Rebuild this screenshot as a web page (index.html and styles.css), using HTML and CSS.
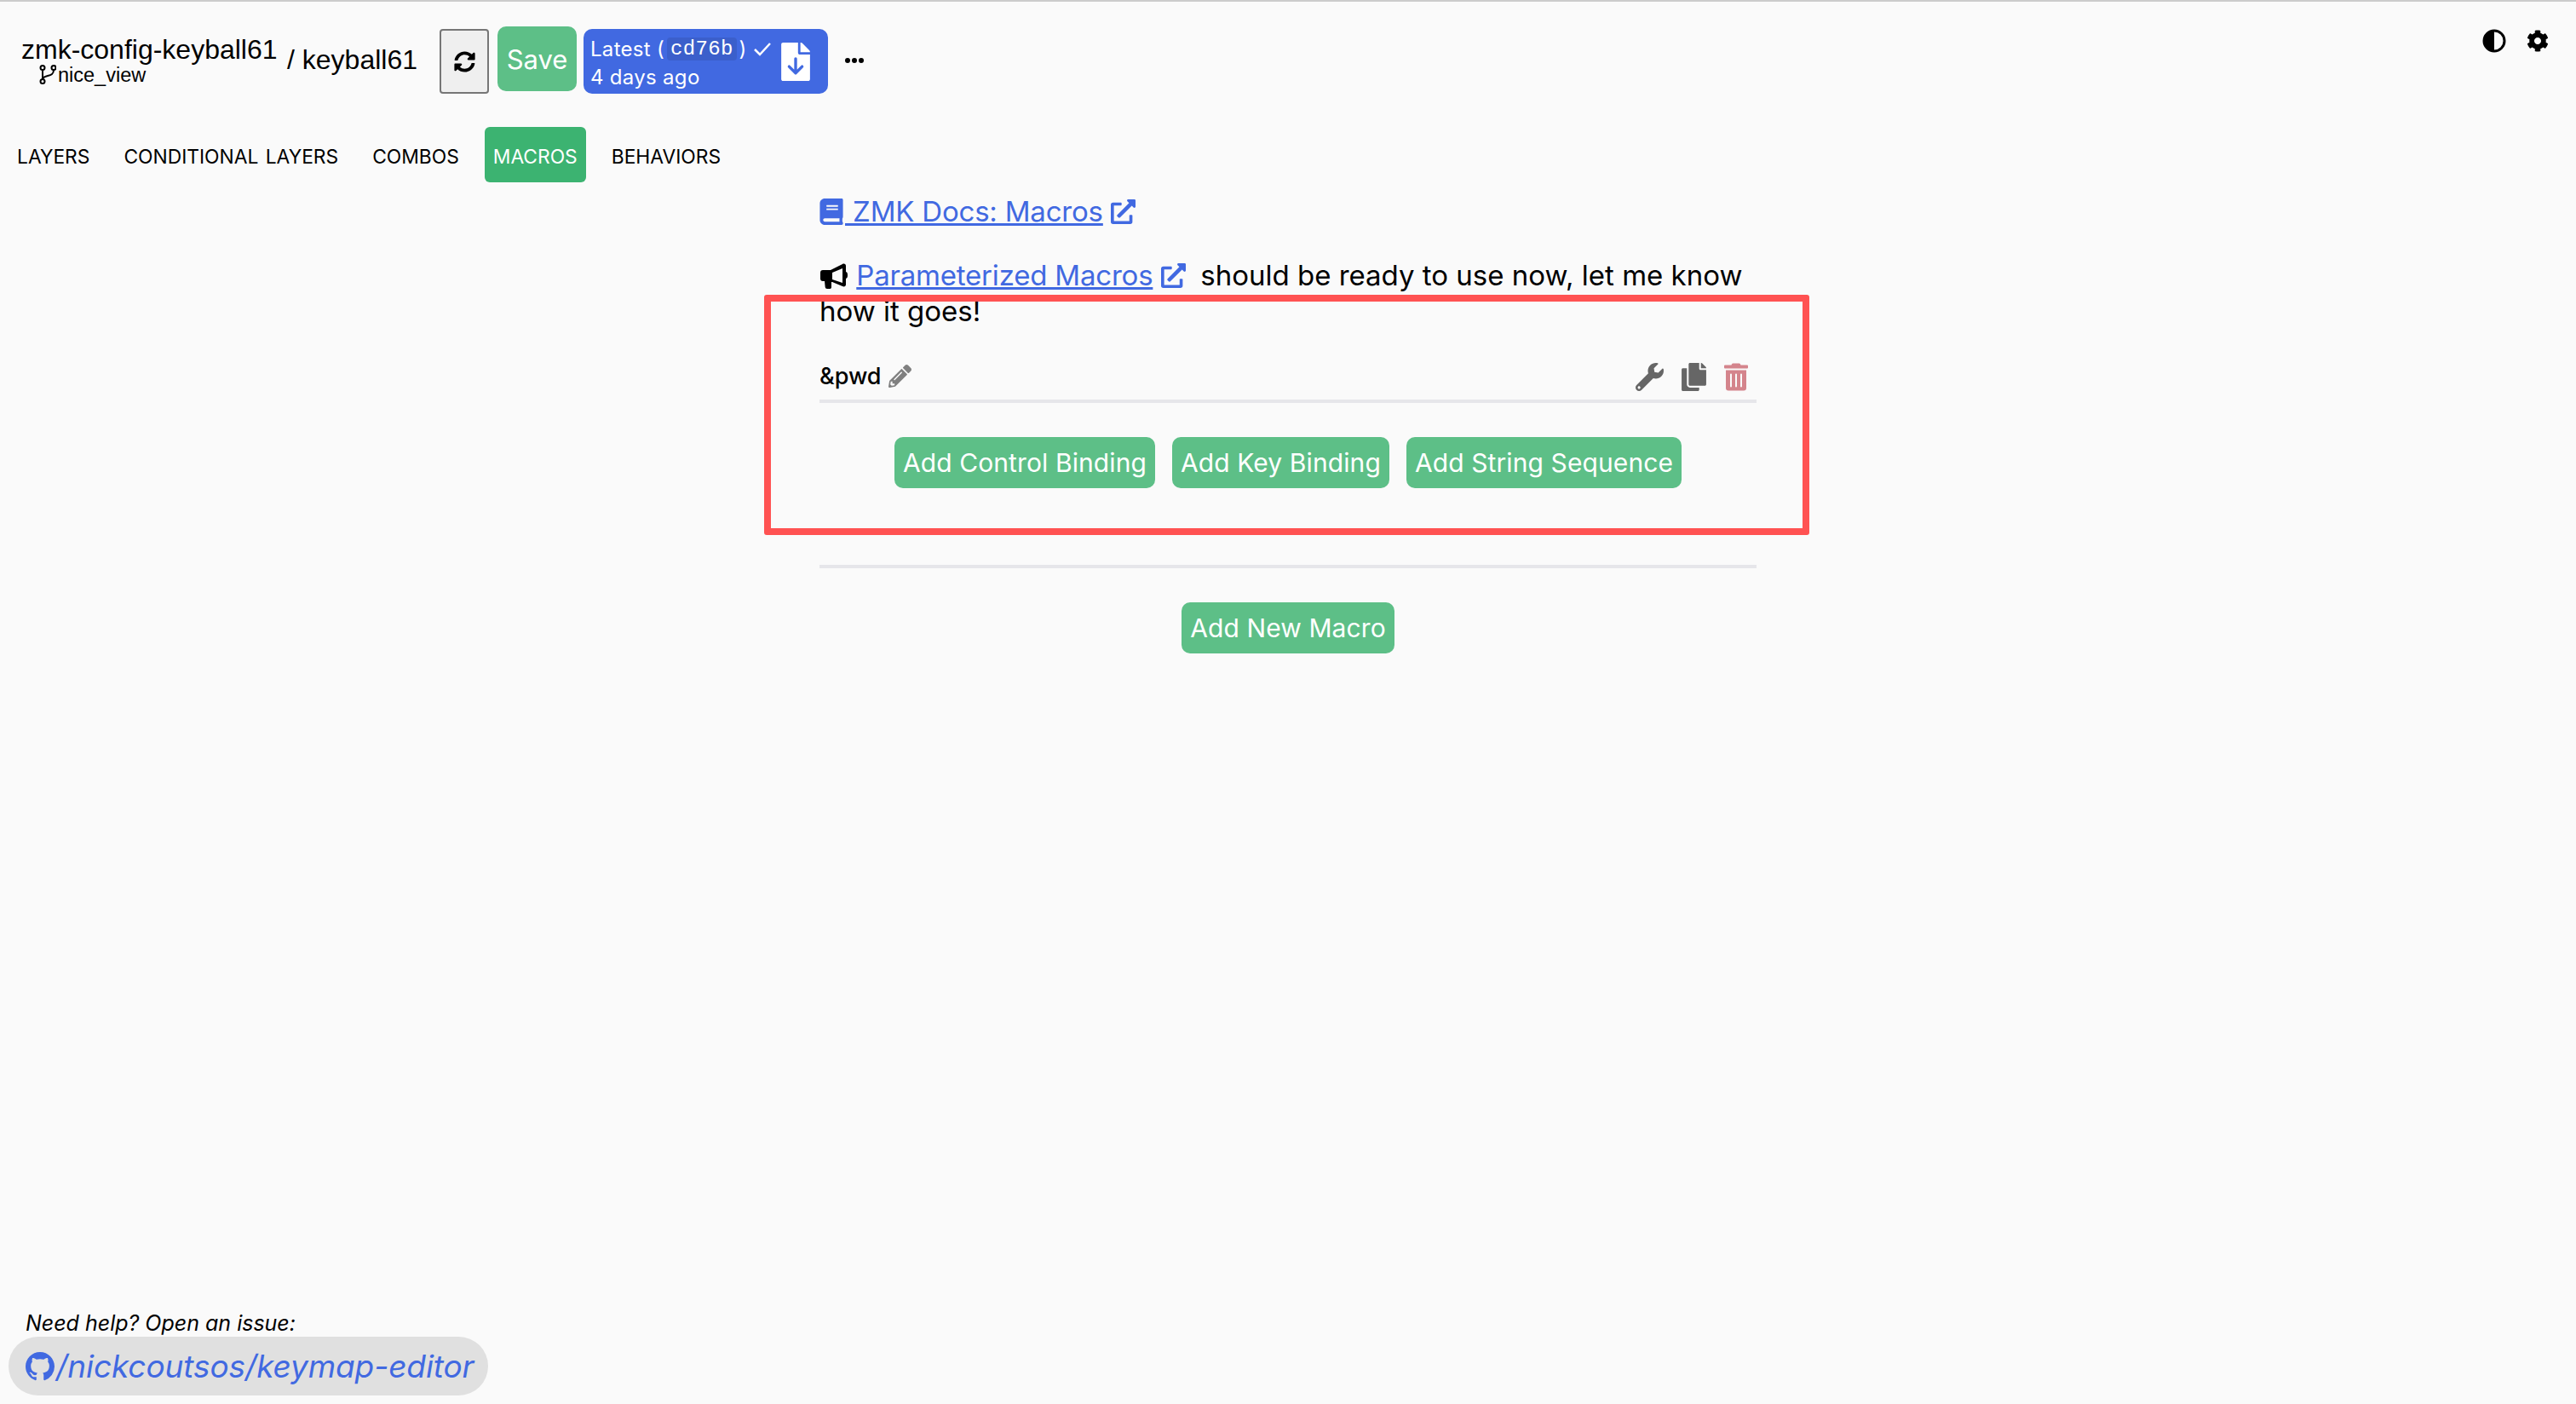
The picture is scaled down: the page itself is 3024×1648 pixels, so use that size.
FILE: index.html
```html
<!DOCTYPE html>
<html lang="en">
<head>
    <meta charset="UTF-8">
    <title>Keymap Editor</title>
    <link rel="stylesheet" href="styles.css">
</head>
<body>
    <header class="toolbar">
        <div class="repo">
            <div class="repo-name">zmk-config-keyball61</div>
            <div class="repo-branch">
                <svg class="icon-branch" viewBox="0 0 20 23"><circle cx="4" cy="3.500" r="2.500"/><circle cx="17" cy="3.500" r="2.500"/><circle cx="4" cy="19.500" r="2.500"/><path d="M4 6v11M17 6c0 5-3 6-7 7s-6 2-6 4"/></svg>
                <span>nice_view</span>
            </div>
        </div>
        <div class="keymap-name">/ keyball61</div>
        <button class="btn-refresh">
            <svg class="icon-refresh" viewBox="0 0 512 512"><path d="M370.72 133.28C339.458 104.008 298.888 87.962 255.848 88c-77.458.068-144.328 53.178-162.791 126.85-1.344 5.363-6.122 9.15-11.651 9.15H24.103c-7.498 0-13.194-6.807-11.807-14.176C33.933 94.924 134.813 8 256 8c66.448 0 126.791 26.136 171.315 68.685L463.03 40.97C478.149 25.851 504 36.559 504 57.941V192c0 13.255-10.745 24-24 24H345.941c-21.382 0-32.09-25.851-16.971-40.971l41.75-41.749zM32 296h134.059c21.382 0 32.09 25.851 16.971 40.971l-41.75 41.75c31.262 29.273 71.835 45.319 114.876 45.28 77.418-.07 144.315-53.144 162.787-126.849 1.344-5.363 6.122-9.15 11.651-9.15h57.304c7.498 0 13.194 6.807 11.807 14.176C478.067 417.076 377.187 504 256 504c-66.448 0-126.791-26.136-171.315-68.685L48.97 471.03C33.851 486.149 8 475.441 8 454.059V320c0-13.255 10.745-24 24-24z"/></svg>
        </button>
        <button class="btn-save">Save</button>
        <div class="version">
            <div class="version-text">
                <div class="version-line">Latest (<span class="version-hash">cd76b</span>)
                    <svg class="icon-check" viewBox="0 0 24 24"><path d="M3 13l6 6L21 6"/></svg>
                </div>
                <div class="version-line">4 days ago</div>
            </div>
            <svg class="icon-file" viewBox="0 0 384 512">
                <path d="M224 136V0H24C10.7 0 0 10.7 0 24v464c0 13.3 10.7 24 24 24h336c13.3 0 24-10.7 24-24V160H248c-13.2 0-24-10.8-24-24zM377 105L279.1 7c-4.500-4.500-10.600-7-17-7H256v128h128v-6.100c0-6.300-2.500-12.400-7-16.900z"/>
                <path class="file-arrow" d="M192 214v185M105 320l87 87 87-87"/>
            </svg>
        </div>
        <svg class="icon-more" viewBox="0 0 22 6"><circle cx="3" cy="3" r="3"/><circle cx="11" cy="3" r="3"/><circle cx="19" cy="3" r="3"/></svg>
        <div class="toolbar-right">
            <svg class="icon-contrast" viewBox="0 0 28 28"><circle cx="14" cy="14" r="12" class="contrast-ring"/><path d="M14 2a12 12 0 0 0 0 24z"/></svg>
            <svg class="icon-gear" viewBox="0 0 512 512"><path d="M487.4 315.7l-42.6-24.6c4.3-23.2 4.3-47 0-70.2l42.6-24.6c4.9-2.8 7.1-8.600 5.500-14-11.100-35.600-30-67.800-54.700-94.600-3.800-4.100-10-5.100-14.800-2.300L380.800 110c-17.900-15.400-38.500-27.300-60.800-35.100V25.800c0-5.600-3.900-10.500-9.400-11.700-36.700-8.200-74.300-7.800-109.200 0-5.500 1.200-9.400 6.100-9.400 11.700V75c-22.200 7.900-42.800 19.800-60.800 35.100L88.700 85.500c-4.900-2.800-11-1.900-14.800 2.300-24.700 26.700-43.600 58.900-54.700 94.600-1.700 5.400.6 11.200 5.500 14L67.300 221c-4.300 23.200-4.300 47 0 70.200l-42.600 24.600c-4.900 2.800-7.100 8.600-5.500 14 11.100 35.600 30 67.800 54.700 94.600 3.800 4.100 10 5.100 14.800 2.300l42.600-24.600c17.900 15.400 38.500 27.300 60.800 35.100v49.200c0 5.600 3.900 10.500 9.400 11.700 36.700 8.200 74.300 7.800 109.200 0 5.500-1.200 9.400-6.100 9.400-11.700v-49.200c22.200-7.900 42.800-19.800 60.800-35.100l42.600 24.600c4.900 2.800 11 1.900 14.800-2.300 24.700-26.700 43.600-58.900 54.700-94.600 1.500-5.500-.7-11.300-5.600-14.100zM256 336c-44.100 0-80-35.900-80-80s35.900-80 80-80 80 35.900 80 80-35.900 80-80 80z"/></svg>
        </div>
    </header>

    <nav class="tabs">
        <a class="tab">LAYERS</a>
        <a class="tab">CONDITIONAL LAYERS</a>
        <a class="tab">COMBOS</a>
        <a class="tab tab-active">MACROS</a>
        <a class="tab">BEHAVIORS</a>
    </nav>

    <main class="content">
        <p class="docs-line">
            <a class="link">
                <svg class="icon-book" viewBox="0 0 448 512"><path d="M448 360V24c0-13.300-10.700-24-24-24H96C43 0 0 43 0 96v320c0 53 43 96 96 96h328c13.300 0 24-10.700 24-24v-16c0-7.500-3.500-14.300-8.900-18.700-4.200-15.400-4.200-59.300 0-74.700 5.400-4.300 8.900-11.100 8.900-18.600zM128 134c0-3.300 2.700-6 6-6h212c3.300 0 6 2.700 6 6v20c0 3.300-2.700 6-6 6H134c-3.300 0-6-2.700-6-6v-20zm0 64c0-3.300 2.700-6 6-6h212c3.300 0 6 2.700 6 6v20c0 3.300-2.700 6-6 6H134c-3.300 0-6-2.700-6-6v-20zm253.400 250H96c-17.700 0-32-14.300-32-32 0-17.600 14.400-32 32-32h285.400c-1.900 17.100-1.900 46.900 0 64z"/></svg>
                ZMK Docs: Macros</a>
            <svg class="icon-external" viewBox="0 0 512 512"><path d="M432,320H400a16,16,0,0,0-16,16V448H64V128H208a16,16,0,0,0,16-16V80a16,16,0,0,0-16-16H48A48,48,0,0,0,0,112V464a48,48,0,0,0,48,48H400a48,48,0,0,0,48-48V336A16,16,0,0,0,432,320ZM488,0h-128c-21.370,0-32.050,25.910-17,41l35.730,35.730L135,320.370a24,24,0,0,0,0,34L157.670,377a24,24,0,0,0,34,0L435.280,133.320,471,169c15,15,41,4.500,41-17V24A24,24,0,0,0,488,0Z"/></svg>
        </p>
        <p class="notice">
            <svg class="icon-bullhorn" viewBox="0 0 32 32"><path fill-rule="evenodd" d="M3 9h9L26 2c2-1 4 0 4 2v7c1.500.5 2 1.500 2 4s-.5 3.500-2 4v7c0 2-2 3-4 2L14 23h-1v6c0 1.500-1 2-2 2H8c-1.500 0-2-.7-2.300-2L5 22H3c-2 0-3-1-3-3v-7c0-2 1-3 3-3zM14 12v8l12 4V7z"/></svg>
            <a class="link">Parameterized Macros</a>
            <svg class="icon-external" viewBox="0 0 512 512"><path d="M432,320H400a16,16,0,0,0-16,16V448H64V128H208a16,16,0,0,0,16-16V80a16,16,0,0,0-16-16H48A48,48,0,0,0,0,112V464a48,48,0,0,0,48,48H400a48,48,0,0,0,48-48V336A16,16,0,0,0,432,320ZM488,0h-128c-21.370,0-32.050,25.910-17,41l35.730,35.730L135,320.370a24,24,0,0,0,0,34L157.670,377a24,24,0,0,0,34,0L435.280,133.320,471,169c15,15,41,4.500,41-17V24A24,24,0,0,0,488,0Z"/></svg>
            <span class="notice-text">&nbsp;should be ready to use now, let me know</span>
            <span>how it goes!</span>
        </p>

        <div class="macro-head">
            <span class="macro-name">&amp;pwd</span>
            <svg class="icon-pencil" viewBox="0 0 512 512"><path d="M497.900 142.100l-46.100 46.100c-4.700 4.700-12.300 4.700-17 0l-111-111c-4.700-4.700-4.700-12.300 0-17l46.100-46.100c18.700-18.700 49.100-18.700 67.900 0l60.100 60.100c18.800 18.700 18.800 49.100 0 67.900zM284.200 99.800L21.600 362.400.4 483.900c-2.900 16.400 11.400 30.600 27.800 27.800l121.500-21.300 262.600-262.600c4.700-4.700 4.700-12.300 0-17l-111-111c-4.800-4.700-12.400-4.700-17.100 0zM124.100 339.900c-5.500-5.500-5.500-14.300 0-19.800l154-154c5.500-5.500 14.300-5.500 19.800 0s5.500 14.300 0 19.800l-154 154c-5.500 5.500-14.300 5.500-19.800 0zM88 424h48v36.300l-64.500 11.300-31.100-31.100L51.700 376H88v48z"/></svg>
            <div class="macro-actions">
                <svg class="icon-action" viewBox="0 0 512 512"><path d="M507.730 109.100c-2.240-9.030-13.540-12.090-20.120-5.510l-74.360 74.360-67.880-11.310-11.310-67.880 74.360-74.360c6.620-6.620 3.430-17.900-5.660-20.160-47.380-11.740-99.550.91-136.580 37.930-39.640 39.640-50.550 97.100-34.050 147.200L18.740 402.760c-24.990 24.990-24.990 65.510 0 90.500 24.990 24.990 65.510 24.990 90.500 0l213.210-213.210c50.120 16.710 107.470 5.680 147.370-34.220 37.070-37.070 49.700-89.320 37.910-136.730zM64 472c-13.250 0-24-10.750-24-24 0-13.260 10.750-24 24-24s24 10.740 24 24c0 13.250-10.750 24-24 24z"/></svg>
                <svg class="icon-action" viewBox="0 0 448 512"><path d="M320 448v40c0 13.255-10.745 24-24 24H24c-13.255 0-24-10.745-24-24V120c0-13.255 10.745-24 24-24h72v296c0 30.879 25.121 56 56 56h168zm0-344V0H152c-13.255 0-24 10.745-24 24v368c0 13.255 10.745 24 24 24h272c13.255 0 24-10.745 24-24V128H344c-13.200 0-24-10.800-24-24zm120.971-31.029L375.029 7.029A24 24 0 0 0 358.059 0H352v96h96v-6.059a24 24 0 0 0-7.029-16.970z"/></svg>
                <svg class="icon-action icon-trash" viewBox="0 0 448 512"><path d="M32 464a48 48 0 0 0 48 48h288a48 48 0 0 0 48-48V128H32zm272-256a16 16 0 0 1 32 0v224a16 16 0 0 1-32 0zm-96 0a16 16 0 0 1 32 0v224a16 16 0 0 1-32 0zm-96 0a16 16 0 0 1 32 0v224a16 16 0 0 1-32 0zM432 32H312l-9.400-18.700A24 24 0 0 0 281.100 0H166.800a23.720 23.720 0 0 0-21.400 13.300L136 32H16A16 16 0 0 0 0 48v32a16 16 0 0 0 16 16h416a16 16 0 0 0 16-16V48a16 16 0 0 0-16-16z"/></svg>
            </div>
        </div>
        <div class="macro-buttons">
            <button class="btn-green">Add Control Binding</button>
            <button class="btn-green">Add Key Binding</button>
            <button class="btn-green">Add String Sequence</button>
        </div>
        <div class="add-macro">
            <button class="btn-green">Add New Macro</button>
        </div>
    </main>

    <footer class="help">
        <div class="help-text">Need help? Open an issue:</div>
        <a class="repo-pill">
            <svg class="icon-github" viewBox="0 0 16 16"><path d="M8 0C3.580 0 0 3.580 0 8c0 3.540 2.290 6.530 5.470 7.590.4.070.55-.17.55-.38 0-.19-.01-.82-.01-1.490-2.010.37-2.530-.49-2.690-.94-.09-.23-.48-.94-.82-1.130-.28-.15-.68-.52-.01-.53.63-.01 1.080.58 1.230.82.72 1.210 1.870.87 2.330.66.070-.52.28-.87.51-1.070-1.780-.2-3.640-.89-3.640-3.950 0-.87.31-1.590.82-2.150-.08-.2-.36-1.020.08-2.120 0 0 .67-.21 2.200.82.64-.18 1.320-.27 2-.27.68 0 1.360.09 2 .27 1.530-1.040 2.200-.82 2.200-.82.44 1.100.16 1.920.08 2.120.51.56.82 1.270.82 2.150 0 3.070-1.870 3.750-3.650 3.950.29.25.54.73.54 1.480 0 1.070-.01 1.930-.01 2.200 0 .21.15.46.55.38A8.013 8.013 0 0016 8c0-4.420-3.580-8-8-8z"/></svg>
            <span>/nickcoutsos/keymap-editor</span>
        </a>
    </footer>

    <div class="highlight-box"></div>
</body>
</html>
```

FILE: styles.css
```css
* {
    box-sizing: border-box;
}

body {
    margin: 0;
    height: 1648px;
    overflow: hidden;
    position: relative;
    display: flex;
    flex-direction: column;
    border-top: 2px solid #cccccc;
    background-color: #fafafa;
    color: #000;
    font-family: Inter, "Liberation Sans", sans-serif;
}

/* top bar */
.toolbar {
    display: flex;
    align-items: center;
    height: 140px;
    padding-left: 25px;
}

.repo {
    width: 312px;
    margin-top: -2px;
}

.repo-name {
    font-family: "Liberation Sans", sans-serif;
    font-size: 32px;
    line-height: 33px;
}

.repo-branch {
    display: flex;
    align-items: center;
    padding-left: 21px;
    font-family: "Liberation Sans", sans-serif;
    font-size: 23.5px;
    line-height: 26px;
}

.icon-branch {
    flex: none;
    width: 20px;
    height: 23px;
    margin-right: 2px;
    fill: none;
    stroke: #000;
    stroke-width: 2;
}

.keymap-name {
    width: 179px;
    font-family: "Liberation Sans", sans-serif;
    font-size: 32px;
    margin-top: -4px;
}

.btn-refresh {
    display: flex;
    align-items: center;
    justify-content: center;
    width: 58px;
    height: 76px;
    padding: 0;
    border: 2px solid #767676;
    border-radius: 4px;
    background-color: #efefef;
    margin-right: 10px;
}

.icon-refresh {
    width: 25px;
    height: 25px;
}

.btn-save {
    width: 93px;
    height: 76px;
    margin-top: -6px;
    margin-right: 8px;
    padding: 0;
    border: none;
    border-radius: 10px;
    background-color: #5dbf87;
    color: #fff;
    font-family: inherit;
    font-size: 31px;
}

.version {
    display: flex;
    align-items: center;
    width: 287px;
    height: 76px;
    padding-left: 8px;
    border-radius: 10px;
    background-color: #4169e1;
    color: #fff;
    font-size: 24px;
    letter-spacing: 0.3px;
}

.version-text {
    width: 224px;
    padding-top: 3px;
}

.version-line {
    display: flex;
    align-items: center;
    height: 33px;
}

.version-hash {
    margin: 0 3px;
    padding: 0 4px;
    border-radius: 4px;
    background-color: #3b5fcb;
    font-family: "Liberation Mono", monospace;
}

.icon-check {
    width: 24px;
    height: 24px;
    margin-left: 6px;
    fill: none;
    stroke: #fff;
    stroke-width: 2.5;
}

.icon-file {
    width: 34px;
    height: 45px;
    fill: #fff;
}

.file-arrow {
    fill: none;
    stroke: #4169e1;
    stroke-width: 38;
    stroke-linecap: round;
    stroke-linejoin: round;
}

.icon-more {
    width: 22px;
    height: 6px;
    margin-left: 20px;
    margin-top: -2px;
}

.toolbar-right {
    display: flex;
    align-items: center;
    gap: 24px;
    margin-left: auto;
    margin-right: 32px;
    margin-top: -48px;
}

.icon-contrast {
    width: 28px;
    height: 28px;
}

.contrast-ring {
    fill: none;
    stroke: #000;
    stroke-width: 3;
}

.icon-gear {
    width: 26px;
    height: 28px;
}

/* tabs */
.tabs {
    display: flex;
    align-items: center;
    height: 66px;
    margin-top: 6px;
    padding-left: 10px;
    font-size: 22.8px;
}

.tab {
    display: block;
    padding: 21px 10px 17px;
    margin-right: 20px;
    line-height: 27px;
    border-radius: 6px;
    word-spacing: 2px;
}

.tab-active {
    background-color: #3cb371;
    color: #fff;
}

/* macro page */
.content {
    width: 1100px;
    margin: 0 auto;
    font-size: 33px;
    line-height: 42px;
}

.content p {
    margin: 0;
}

.link {
    color: #4169e1;
    text-decoration: underline;
    letter-spacing: -0.2px;
}

.docs-line {
    padding-top: 13px;
    height: 88px;
}

.notice {
    height: 113px;
}

.notice-text {
    margin-left: -1px;
}

.icon-book {
    width: 28px;
    height: 31px;
    margin-right: 2px;
    fill: #4169e1;
    vertical-align: -4px;
}

.icon-external {
    width: 29px;
    height: 29px;
    fill: #4169e1;
    vertical-align: -3px;
}

.icon-bullhorn {
    width: 34px;
    height: 32px;
    vertical-align: -5px;
}

.macro-head {
    display: flex;
    align-items: center;
    height: 58px;
    padding-right: 10px;
    border-bottom: 4px solid #e6e6ea;
    font-size: 27px;
}

.macro-name {
    font-weight: 500;
}

.icon-pencil {
    width: 27px;
    height: 27px;
    margin-left: 8px;
    margin-top: -2px;
    fill: #808080;
}

.macro-actions {
    display: flex;
    align-items: center;
    gap: 19px;
    margin-left: auto;
}

.icon-action {
    width: 33px;
    height: 33px;
    fill: #666666;
}

.icon-trash {
    width: 28px;
    fill: #d4848c;
}

.macro-buttons {
    display: flex;
    justify-content: center;
    gap: 20px;
    padding: 40px 0 90px;
    border-bottom: 4px solid #e6e6ea;
}

.add-macro {
    display: flex;
    justify-content: center;
    padding-top: 40px;
}

.btn-green {
    height: 60px;
    padding: 0 10px;
    border: none;
    border-radius: 10px;
    background-color: #5dbf87;
    color: #fff;
    font-family: inherit;
    font-size: 30px;
    letter-spacing: 0.1px;
}

/* help footer */
.help {
    margin-top: auto;
    padding: 0 0 10px 10px;
}

.help-text {
    padding-left: 20px;
    font-size: 25px;
    font-style: italic;
    line-height: 32px;
}

.repo-pill {
    display: inline-flex;
    align-items: center;
    width: 563px;
    height: 69px;
    padding-left: 20px;
    border-radius: 35px;
    background-color: #e0e0e0;
    color: #4169e1;
    font-size: 37px;
    font-style: italic;
    letter-spacing: -0.1px;
}

.icon-github {
    width: 34px;
    height: 34px;
    margin-right: 2px;
    fill: #4169e1;
}

/* red annotation drawn over the screenshot */
.highlight-box {
    position: absolute;
    left: 897px;
    top: 344px;
    width: 1227px;
    height: 282px;
    border: 8px solid #ff5252;
    border-radius: 3px;
}
```
